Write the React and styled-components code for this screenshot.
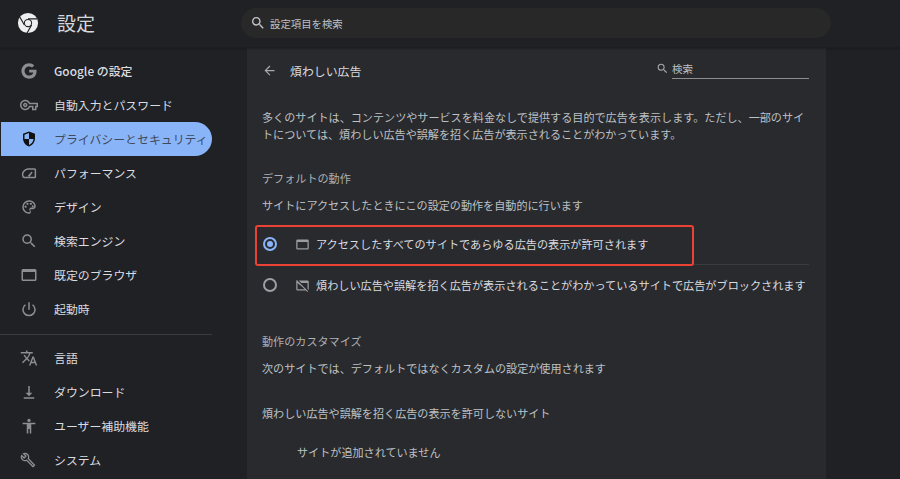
import React from 'react';
import styled, { createGlobalStyle } from 'styled-components';

const Global = createGlobalStyle`
  html, body { margin: 0; padding: 0; background: #202124; height: 100%; overflow: hidden; }
  * { box-sizing: border-box; }
  body { font-family: "Noto Sans CJK JP", "Noto Sans", sans-serif; color: #e8eaed; }
`;

const Page = styled.div`
  width: 900px; height: 479px; display: flex; flex-direction: column; overflow: hidden; position: relative;
`;
const Header = styled.header`
  height: 48px; flex: none; display: flex; align-items: center; background: #202124;
  border-bottom: 1px solid #1c1d20; box-shadow: 0 1px 2px rgba(0,0,0,.25); z-index: 2;
`;
const Brand = styled.div`
  width: 241px; flex: none; display: flex; align-items: center; padding-left: 17px; gap: 18px; padding-bottom: 1px;
`;
const BrandTitle = styled.h1`
  margin: 0; font-size: 19px; line-height: 22px; font-weight: 400; color: #d5d7da;
`;
const SearchBar = styled.div`
  width: 590px; height: 30px; margin-top: -1px; border-radius: 15px; background: #282828;
  display: flex; align-items: center; padding-left: 9px; gap: 4px;
  font-size: 10.4px; color: #bdc1c6;
`;
const Body = styled.div`
  flex: 1; display: flex; min-height: 0;
`;
const Sidebar = styled.nav`
  width: 247px; flex: none; padding-top: 6px;
`;
const NavRow = styled.div`
  width: 211px; height: 34px; margin-left: 1px; display: flex; align-items: center; padding: 0 0 0 19px;
  border-radius: ${p => (p.$active ? '0 17px 17px 0' : '0')};
  background: ${p => (p.$active ? '#8ab4f8' : 'transparent')};
  color: ${p => (p.$active ? '#3f4a5e' : '#dadce0')};
  font-size: 11.9px; white-space: nowrap; overflow: hidden;
  font-weight: ${p => (p.$bold ? 500 : 400)};
`;
const NavIcon = styled.span`
  width: 34px; flex: none; display: flex; align-items: center;
  color: ${p => (p.$active ? '#111' : '#8c8e92')};
`;
const NavLabel = styled.span`
  position: relative; top: -1px;
`;
const Divider = styled.div`
  width: 212px; height: 1px; margin: 8px 0 6px; background: #3a3b3e;
`;
const Main = styled.main`
  width: 579px; flex: none; background: #292a2d; padding: 0 17px 0 15px; display: flex; flex-direction: column;
  position: relative;
`;
const SubHead = styled.div`
  height: 46px; display: flex; align-items: center; margin-bottom: 15px; padding-bottom: 2px;
`;
const BackIcon = styled.span`
  width: 28px; display: flex; color: #a6a8ab;
`;
const SubTitle = styled.h2`
  flex: 1; margin: 0; font-size: 11.9px; font-weight: 400; color: #dadce0;
`;
const LocalSearch = styled.div`
  width: 153px; height: 18px; display: flex; align-items: flex-start;
`;
const LocalGlyph = styled.span`
  display: flex; width: 16px; flex: none; color: #a6a8ab; padding-top: 1px;
`;
const LocalField = styled.div`
  flex: 1; height: 18px; line-height: 15px; font-size: 10.5px; color: #bdc1c6;
  border-bottom: 1.5px solid #8d8e90;
`;
const Paragraph = styled.p`
  margin: 0; width: 548px; font-size: 11.1px; line-height: 17px; color: #bdc1c6;
`;
const SectionTitle = styled.h3`
  margin: ${p => p.$mt}px 0 0; font-size: 11.1px; line-height: 17px; font-weight: 400; color: #aeb0b4;
`;
const Note = styled.p`
  margin: ${p => p.$mt}px 0 0; font-size: 11.1px; line-height: 17px; color: #bdc1c6;
`;
const Options = styled.div`
  margin-top: 10px; display: flex; flex-direction: column;
`;
const Option = styled.div`
  height: 40px; display: flex; align-items: center; padding-left: 1px; font-size: 11.15px; color: #dadce0;
  white-space: nowrap;
  & + & { border-top: 1px solid #3a3b3e; height: 41px; }
`;
const Radio = styled.span`
  width: 14px; height: 14px; flex: none; border-radius: 50%; display: flex; align-items: center; justify-content: center;
  border: 2px solid ${p => (p.$on ? '#8ab4f8' : '#9aa0a6')};
  margin-right: 18px;
  &::after { content: ''; width: 6px; height: 6px; border-radius: 50%; background: ${p => (p.$on ? '#8ab4f8' : 'transparent')}; }
`;
const OptionIcon = styled.span`
  width: 21px; flex: none; display: flex; color: #9a9c9f;
`;
const Empty = styled.p`
  margin: 22px 0 0 35px; font-size: 11.1px; line-height: 17px; color: #bdc1c6;
`;
const Highlight = styled.div`
  position: absolute; left: 8px; top: 177px; width: 439px; height: 41px; border: 2px solid #ea4335; border-radius: 3px;
  pointer-events: none;
`;

const I = ({ children, size = 18, vb = 24, ...r }) => (
  <svg width={size} height={size} viewBox={`0 0 ${vb} ${vb}`} fill="currentColor" {...r}>{children}</svg>
);

const searchPath = 'M15.5 14h-.79l-.28-.27A6.471 6.471 0 0 0 16 9.5 6.5 6.5 0 1 0 9.5 16c1.61 0 3.09-.59 4.23-1.57l.27.28v.79l5 4.99L20.49 19l-4.99-5zm-6 0C7.01 14 5 11.99 5 9.5S7.01 5 9.5 5 14 7.01 14 9.5 11.99 14 9.5 14z';

const icons = {
  g: <I><path d="M12.2 10.2v3.9h5.5c-.5 2.5-2.6 4-5.5 4-3.4 0-6.1-2.8-6.1-6.1s2.7-6.1 6.1-6.1c1.5 0 2.9.5 3.9 1.5l2.9-2.9C17.1 2.7 14.8 1.7 12.2 1.7 6.5 1.7 1.9 6.3 1.9 12s4.6 10.3 10.300 10.300c5.900 0 9.900-4.200 9.900-10 0-.7-.1-1.400-.2-2.100z"/></I>,
  key: <I><path d="M22 19h-6v-4h-2.68c-1.14 2.42-3.6 4-6.32 4-3.86 0-7-3.14-7-7s3.14-7 7-7c2.72 0 5.17 1.58 6.32 4H24v6h-2v4zm-4-2h2v-4h2v-2H11.94l-.23-.67C11.01 8.34 9.11 7 7 7c-2.76 0-5 2.24-5 5s2.24 5 5 5c2.11 0 4.01-1.34 4.71-3.33l.23-.67H18v4zM7 15c-1.65 0-3-1.35-3-3s1.35-3 3-3 3 1.35 3 3-1.35 3-3 3zm0-4c-.55 0-1 .45-1 1s.45 1 1 1 1-.45 1-1-.45-1-1-1z"/></I>,
  shield: <I><path d="M12 2 4 5v6.100c0 5 3.400 9.700 8 10.900 4.600-1.200 8-5.900 8-10.900V5zm0 2v8h6c-.4 3.600-2.800 6.800-6 7.900V12H6V6.300z"/></I>,
  gauge: <I><path d="M6 19c-1.700 0-3.500-1.300-3.500-5C2.500 9 7 5.500 12 5.500h7.500a2 2 0 0 1 2 2V17a2 2 0 0 1-2 2zm.2-2h13.300V7.500H12c-4 0-7.500 2.800-7.500 6.500 0 1.800.6 3 1.700 3zM10.500 15.500l5-5.500 1.300 1.200-4.300 6z" fillRule="evenodd"/></I>,
  palette: <I><path d="M12 3a9 9 0 0 0 0 18c1.400 0 2.500-1.100 2.500-2.500 0-.6-.2-1.200-.6-1.600-.4-.5-.4-1.100-.1-1.500.3-.3.7-.4 1.200-.4H17c2.200 0 4-1.800 4-4C21 6.600 17 3 12 3zm0 2c3.900 0 7 2.700 7 5.500 0 1.100-.9 2-2 2h-2c-2.300 0-3.500 2.500-2 4.500.5.700.5 2-1 2a7 7 0 0 1 0-14z"/><circle cx="7.500" cy="11.500" r="1.500"/><circle cx="10" cy="7.800" r="1.500"/><circle cx="14.500" cy="7.800" r="1.500"/><circle cx="17" cy="11" r="1.300"/></I>,
  search: <I><path d={searchPath}/></I>,
  win: <I><path d="M20 4H4a2 2 0 0 0-2 2v12c0 1.100.9 2 2 2h16a2 2 0 0 0 2-2V6a2 2 0 0 0-2-2zm0 14H4V8h16z"/></I>,
  power: <I><path d="M11 3h2v10h-2z"/><path d="M17.400 5.600 16 7a7 7 0 1 1-8 0L6.600 5.600A9 9 0 1 0 17.400 5.600z"/></I>,
  lang: <I><path d="m12.900 15.100-2.600-2.500a17.500 17.500 0 0 0 3.700-6.600H17V4h-7V2H8v2H1v2h11.200a15.700 15.700 0 0 1-3.200 5.400A15.700 15.700 0 0 1 6.700 8h-2c.7 1.600 1.700 3.200 3 4.600l-5.100 5L4 19l5-5 3.100 3.100zM18.500 10h-2L12 22h2l1.100-3h4.800l1.100 3h2zm-2.600 7 1.600-4.300 1.600 4.300z"/></I>,
  down: <I><path d="M13 4h-2v9H7.500l4.500 4.500 4.500-4.500H13zM5 19h14v2H5z"/></I>,
  access: <I><circle cx="12" cy="4.500" r="2.200"/><path d="M20.500 7.500h-17v2H9V22h2v-6h2v6h2V9.500h5.500z"/></I>,
  wrench: <I size={16}><path d="M22.61 18.99l-9.08-9.08c.93-2.34.45-5.1-1.44-7C9.79.61 6.21.4 3.66 2.26L7.5 6.11 6.08 7.52 2.25 3.69C.39 6.23.6 9.82 2.9 12.11c1.86 1.86 4.57 2.35 6.89 1.48l9.11 9.11c.39.39 1.02.39 1.41 0l2.3-2.3c.5-.38.5-1.02 0-1.41zm-3 1.6l-9.46-9.46c-.61.45-1.29.72-2 .82-1.36.2-2.79-.21-3.83-1.25C3.37 9.76 2.93 8.5 3 7.26l3.09 3.09 4.24-4.24-3.09-3.09c1.24-.07 2.49.37 3.44 1.31 1.08 1.08 1.49 2.57 1.24 3.96-.12.71-.42 1.37-.88 1.96l9.45 9.45-.88.89z"/></I>,
};

const navTop = [
  ['g', 'Google の設定', true],
  ['key', '自動入力とパスワード'],
  ['shield', 'プライバシーとセキュリティ', false, true],
  ['gauge', 'パフォーマンス'],
  ['palette', 'デザイン'],
  ['search', '検索エンジン'],
  ['win', '既定のブラウザ'],
  ['power', '起動時'],
];
const navBottom = [
  ['lang', '言語'],
  ['down', 'ダウンロード'],
  ['access', 'ユーザー補助機能'],
  ['wrench', 'システム'],
];

const Row = ({ item }) => (
  <NavRow $active={item[3]} $bold={item[2]}>
    <NavIcon $active={item[3]}>{icons[item[0]]}</NavIcon>
    <NavLabel>{item[1]}</NavLabel>
  </NavRow>
);

const ChromeLogo = () => (
  <svg width="22" height="22" viewBox="0 0 24 24" fill="#eceef0">
    <path fillRule="evenodd" d="M12 1a11 11 0 1 1 0 22 11 11 0 0 1 0-22zm0 6.500a4.500 4.500 0 1 0 0 9 4.500 4.500 0 0 0 0-9z"/>
    <g stroke="#202124" strokeWidth="1.300" fill="none">
      <path d="M12 7.500h10M8.100 14.250 3 5.500M15.900 14.250 11 23"/>
    </g>
    <circle cx="12" cy="12" r="3.400"/>
  </svg>
);

export default function App() {
  return (
    <Page>
      <Global />
      <Header>
        <Brand>
          <ChromeLogo />
          <BrandTitle>設定</BrandTitle>
        </Brand>
        <SearchBar>
          <I size={16} style={{ color: '#c4c7ca' }}><path d={searchPath}/></I>
          設定項目を検索
        </SearchBar>
      </Header>
      <Body>
        <Sidebar>
          {navTop.map(it => <Row key={it[1]} item={it} />)}
          <Divider />
          {navBottom.map(it => <Row key={it[1]} item={it} />)}
        </Sidebar>
        <Main>
          <SubHead>
            <BackIcon>
              <I size={15}><path d="M20 11H7.800l5.600-5.600L12 4l-8 8 8 8 1.400-1.400L7.800 13H20z"/></I>
            </BackIcon>
            <SubTitle>煩わしい広告</SubTitle>
            <LocalSearch>
              <LocalGlyph><I size={13}><path d={searchPath}/></I></LocalGlyph>
              <LocalField>検索</LocalField>
            </LocalSearch>
          </SubHead>
          <Paragraph>多くのサイトは、コンテンツやサービスを料金なしで提供する目的で広告を表示します。ただし、一部のサイトについては、煩わしい広告や誤解を招く広告が表示されることがわかっています。</Paragraph>
          <SectionTitle $mt={27}>デフォルトの動作</SectionTitle>
          <Note $mt={10}>サイトにアクセスしたときにこの設定の動作を自動的に行います</Note>
          <Options>
            <Option>
              <Radio $on />
              <OptionIcon><I size={15}><path d="M20 4H4a2 2 0 0 0-2 2v12c0 1.100.9 2 2 2h16a2 2 0 0 0 2-2V6a2 2 0 0 0-2-2zm0 14H4V8h16z"/></I></OptionIcon>
              アクセスしたすべてのサイトであらゆる広告の表示が許可されます
            </Option>
            <Option>
              <Radio />
              <OptionIcon><I size={15}><path d="M2 5h1.500l15 15H4a2 2 0 0 1-2-2zm2 3v10h12zM6 4h14a2 2 0 0 1 2 2v13l-2-2V8H10zM3 3l18 18-1.200 1.200L1.800 4.200z"/></I></OptionIcon>
              煩わしい広告や誤解を招く広告が表示されることがわかっているサイトで広告がブロックされます
            </Option>
          </Options>
          <SectionTitle $mt={28}>動作のカスタマイズ</SectionTitle>
          <Note $mt={10}>次のサイトでは、デフォルトではなくカスタムの設定が使用されます</Note>
          <Note $mt={28}>煩わしい広告や誤解を招く広告の表示を許可しないサイト</Note>
          <Empty>サイトが追加されていません</Empty>
          <Highlight />
        </Main>
      </Body>
    </Page>
  );
}
